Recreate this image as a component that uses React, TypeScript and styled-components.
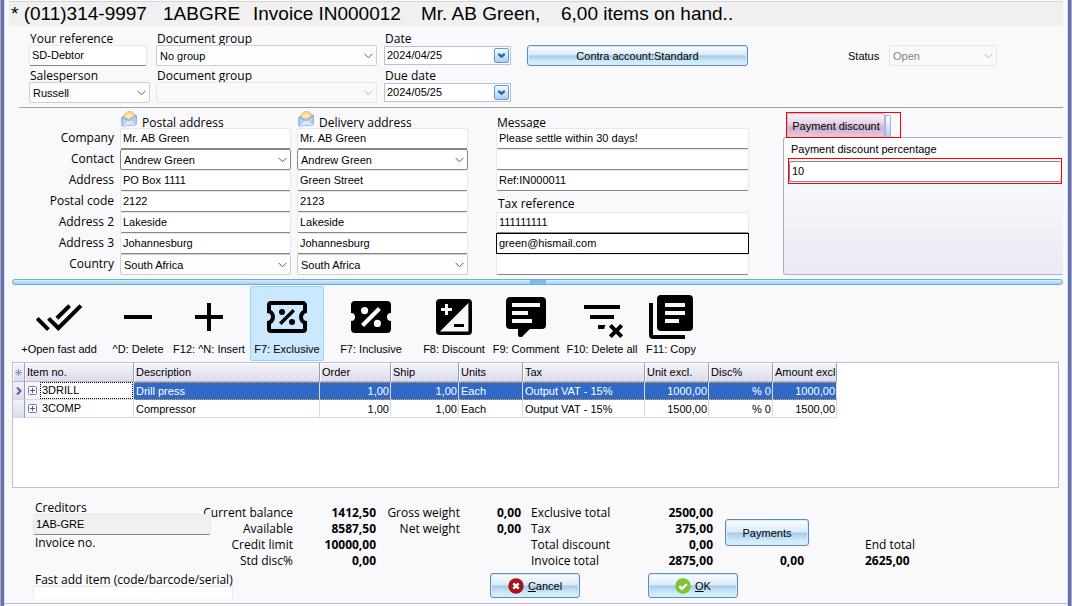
import React, { useState } from "react";
import styled, { createGlobalStyle, css } from "styled-components";

const uiFont = '"Liberation Sans", Arial, sans-serif';
const labelFont = '"Open Sans", "Noto Sans", sans-serif';

const GlobalStyle = createGlobalStyle`
  *, *::before, *::after { box-sizing: border-box; }
  body { margin: 0; padding: 0 1px; background: #a9abb8; }
  body, button, input, select { font-family: ${uiFont}; font-size: 11px; color: #000; }
  button { padding: 0; cursor: default; }
`;

const Window = styled.div`
  min-height: 100vh;
  display: flex;
  flex-direction: column;
  padding: 1px 5px 0 4px;
  background: #f9f9fc;
  border-left: 3px solid #6672b0;
  border-right: 3px solid #6672b0;
  box-shadow: inset 1px 0 #d5d9ec, inset -1px 0 #d5d9ec;
  overflow: hidden;
`;

const TitleBar = styled.header`
  display: flex;
  height: 25px;
  margin-left: 1px;
  padding-left: 2px;
  align-items: center;
  background: #f0f0f0;
  border-top: 1px solid #d6d6d6;
  font-size: 19px;
  line-height: 24px;
  white-space: pre;
`;

const TitlePart = styled.span<{ $width: number }>`
  flex: 0 0 ${(p) => p.$width}px;
`;

const TopFields = styled.section`
  display: flex;
  align-items: flex-start;
  margin-left: 11px;
  padding: 5px 0 2px 10px;
  border-bottom: 1px solid #a0a0a0;
`;

const FieldColumn = styled.div<{ $width: number; $gap: number }>`
  flex: 0 0 ${(p) => p.$width}px;
  min-width: 0;
  margin-right: ${(p) => p.$gap}px;
`;

const Label = styled.label`
  display: block;
  font: 12px/16px ${labelFont};
  white-space: nowrap;
`;

const FieldLabel = styled(Label)`
  height: 16px;
  margin-bottom: -2px;
  padding-left: 1px;
`;

const TextInput = styled.input<{ $focus?: boolean }>`
  display: block;
  width: 100%;
  height: 21px;
  padding: 0 2px 1px;
  border: 1px solid #e8e8ec;
  border-bottom-color: #868686;
  border-radius: 2px;
  background: #fff;
  outline: none;
  &:read-only { background: #f0f0f0; }
  ${(p) => p.$focus && css`border-color: #000; border-radius: 0;`}
`;

const ReferenceInput = styled(TextInput)`
  width: 118px;
  margin-bottom: 2px;
`;

const SelectWrap = styled.div<{ $spaced?: boolean }>`
  position: relative;
  margin-bottom: ${(p) => (p.$spaced ? 2 : 0)}px;
`;

const SelectBox = styled.select<{ $strong?: boolean }>`
  appearance: none;
  display: block;
  width: 100%;
  height: 21px;
  padding: 0 18px 0 3px;
  border: 1px solid ${(p) => (p.$strong ? "#868686" : "#cfcfcf")};
  border-radius: 2px;
  background: ${(p) => (p.$strong ? "#fff" : "#fdfdfd")};
  outline: none;
  &:disabled { border-color: #e6e6e8; background: #f9f9fa; color: #838383; opacity: 1; }
`;

const SelectArrow = styled.svg<{ $dim?: boolean }>`
  position: absolute;
  right: 4px;
  top: 8px;
  width: 9px;
  height: 6px;
  fill: none;
  stroke: ${(p) => (p.$dim ? "#b8b8b8" : "#5c5c5c")};
  pointer-events: none;
`;

const DateBox = styled.div`
  display: flex;
  height: 19px;
  margin: 1px 0 3px;
  padding: 1px;
  border: 1px solid #b9bfde;
  background: #fff;
`;

const DateInput = styled.input`
  flex: 1;
  min-width: 0;
  width: 0;
  padding: 0 1px 1px;
  border: 0;
  outline: none;
  background: transparent;
`;

const DateButton = styled.button`
  width: 15px;
  border: 1px solid #5d9cd8;
  border-radius: 2px;
  background: linear-gradient(#f5faff, #a9d0f0);
  svg { display: block; margin: auto; }
`;

const GlassButton = styled.button<{ $height: number; $width: number }>`
  display: flex;
  align-items: center;
  justify-content: center;
  gap: 4px;
  width: ${(p) => p.$width}px;
  height: ${(p) => p.$height}px;
  border: 1px solid #5c8cc0;
  border-radius: 3px;
  box-shadow: inset 0 0 0 1px #d9ebf8;
  background: linear-gradient(#fbfdff 0%, #dcebf7 47%, #a4cbe9 52%, #cbe6f7 78%, #d8f2fb 100%);
`;

const ContraButton = styled(GlassButton)`
  margin: 14px 100px 0 0;
`;

const StatusField = styled.div`
  display: grid;
  grid-template-columns: 41px 108px;
  align-items: center;
  padding-top: 14px;
`;

const Middle = styled.section`
  display: flex;
`;

const AddressGrid = styled.div`
  display: grid;
  grid-template-columns: 106px 171px 171px 275px;
  grid-template-rows: 20px;
  grid-auto-rows: 21px;
  column-gap: 6px;
  & > :nth-child(4n) { width: auto; margin-left: 22px; }
`;

const RowLabel = styled(Label)`
  text-align: right;
  line-height: 20px;
`;

const ColumnHead = styled.div`
  display: flex;
  gap: 5px;
  padding: 2px 0 0 1px;
  font: 12px/16px ${labelFont};
  white-space: nowrap;
  svg { flex: none; }
`;

const HeadText = styled.span`
  padding-top: 5px;
`;

const TaxLabel = styled(Label)`
  padding: 5px 0 0 2px;
`;

const DiscountPane = styled.div`
  flex: 1;
  min-width: 0;
  margin-left: 34px;
  padding-top: 4px;
`;

const TabStrip = styled.div`
  display: flex;
  width: 115px;
  height: 26px;
  margin: 0 0 -1px 3px;
  border: 1px solid #f00;
  position: relative;
`;

const Tab = styled.button`
  width: 98px;
  border: 1px solid #c9b6cf;
  border-radius: 3px 3px 0 0;
  border-bottom: 0;
  background: linear-gradient(#fbf6fb 0%, #e3cfe2 45%, #cfb0ce 60%, #e2cbe1 100%);
  white-space: nowrap;
`;

const TabStub = styled.span`
  width: 6px;
  margin-top: 2px;
  border: 1px solid #9fb4d8;
  border-bottom: 0;
  border-radius: 0 2px 0 0;
  background: linear-gradient(#fff, #a9d3f3);
`;

const TabPanel = styled.div`
  height: 138px;
  padding: 3px 1px 0 4px;
  border: 1px solid #a8b0d2;
  border-right: 0;
  border-radius: 3px 0 0 3px;
  background: linear-gradient(#fff, #f9f9fc 25%, #eaeaf5);
`;

const PercentLabel = styled.label`
  display: block;
  padding-left: 3px;
  line-height: 16px;
`;

const Highlight = styled.div`
  height: 26px;
  margin-top: 1px;
  padding-top: 2px;
  border: 1px solid #f00;
`;

const PercentInput = styled(TextInput)`
  border-color: #868686;
  border-right: 0;
`;

const Splitter = styled.div`
  display: flex;
  justify-content: center;
  height: 6px;
  margin: 4px 0 0 4px;
  border: 1px solid #6baae0;
  border-radius: 3px;
  background: linear-gradient(#d9edfc, #a3d2f6);
`;

const SplitterGrip = styled.span`
  width: 16px;
  background: #7dbcf0;
`;

const Toolbar = styled.nav`
  display: flex;
  height: 77px;
  padding: 1px 0 0 2px;
`;

const ToolButton = styled.button<{ $width: number; $active?: boolean }>`
  flex: 0 0 ${(p) => p.$width}px;
  display: flex;
  flex-direction: column;
  align-items: center;
  height: 75px;
  padding-top: 6px;
  border: 1px solid ${(p) => (p.$active ? "#99d1ff" : "transparent")};
  border-radius: 2px;
  background: ${(p) => (p.$active ? "#cce8ff" : "transparent")};
  white-space: nowrap;
  svg { width: 48px; height: 48px; flex: none; fill: #000; }
`;

const ToolText = styled.span`
  line-height: 16px;
`;

const GridBox = styled.div`
  min-height: 126px;
  margin: 0 4px 0 4px;
  border: 1px solid #b9bfd8;
  background: #fff;
`;

const ItemTable = styled.table`
  width: 824px;
  table-layout: fixed;
  border-collapse: separate;
  border-spacing: 0;
`;

const HeadCell = styled.th`
  height: 19px;
  padding: 0 2px;
  border-right: 1px solid #929cc4;
  border-bottom: 1px solid #b5bad4;
  background: linear-gradient(#f4f4f8, #dcddea);
  box-shadow: inset 1px 1px #fff;
  font-weight: normal;
  text-align: left;
  white-space: nowrap;
  color: #000;
  svg { display: block; margin: auto; }
`;

const Cell = styled.td<{ $selected?: boolean; $right?: boolean }>`
  height: 18px;
  padding: 0 2px;
  border-right: 1px solid #d8d8f0;
  border-bottom: 1px solid #d8d8f0;
  text-align: ${(p) => (p.$right ? "right" : "left")};
  white-space: nowrap;
  ${(p) => p.$right && css`padding-right: 1px;`}
  ${(p) =>
    p.$selected &&
    css`
      border-top: 1px dotted #e0a050;
      border-bottom: 1px dotted #e0a050;
      background: #316ac5;
      color: #fff;
    `}
`;

const MarkCell = styled(Cell)`
  padding: 0;
  background: linear-gradient(#f2f2f8, #dcddea);
  border-right-color: #929cc4;
  svg { display: block; margin: auto; }
`;

const ItemCell = styled(Cell)`
  padding: 0;
`;

const ItemInner = styled.div<{ $selected?: boolean }>`
  display: flex;
  align-items: center;
  height: 17px;
  background: ${(p) => (p.$selected ? "#fdf3f6" : "#f1f4fd")};
`;

const ExpandButton = styled.button`
  flex: 0 0 15px;
  height: 17px;
  border: 0;
  background: transparent;
  svg { display: block; margin: auto; }
`;

const ItemCode = styled.span<{ $selected?: boolean }>`
  flex: 1;
  height: 17px;
  padding-left: 1px;
  border: 1px ${(p) => (p.$selected ? "dotted #000" : "solid #fff")};
  background: #fff;
  line-height: 15px;
`;

const Footer = styled.footer`
  display: flex;
  align-items: flex-start;
  height: 116px;
  margin: 0 -4px;
  padding: 12px 0 0 29px;
  border-bottom: 1px solid #b5bbd8;
`;

const CreditorColumn = styled.div`
  flex: 0 0 178px;
  min-width: 0;
  ${Label} { padding-left: 2px; }
`;

const CreditorInput = styled(TextInput)`
  position: relative;
  margin: -2px 0 0;
`;

const FastInput = styled(TextInput)`
  width: 200px;
  height: 13px;
  margin-top: -2px;
  border-bottom: 0;
`;

const FastLabel = styled(Label)`
  margin-top: 21px;
`;

const Summary = styled.div`
  flex: 1;
  min-width: 0;
  padding-top: 5px;
`;

const Totals = styled.div`
  display: grid;
  grid-template-columns: 82px 83px 84px 61px 92px 100px 96px 1fr;
  grid-template-rows: repeat(4, 16px);
`;

const TotalLabel = styled.span<{ $col: number; $row: number; $indent?: number }>`
  grid-column: ${(p) => p.$col};
  grid-row: ${(p) => p.$row};
  display: flex;
  justify-content: ${(p) => (p.$indent ? "flex-start" : "flex-end")};
  padding-left: ${(p) => p.$indent || 0}px;
  font: 12px/16px ${labelFont};
  white-space: nowrap;
`;

const TotalValue = styled(TotalLabel)`
  font-weight: bold;
`;

const PaymentsCell = styled.div`
  grid-column: 7;
  grid-row: 1 / 4;
  align-self: end;
  justify-self: end;
  margin-bottom: 7px;
`;

const PaidValue = styled(TotalValue)`
  padding-right: 5px;
`;

const Actions = styled.div`
  display: flex;
  gap: 68px;
  padding: 4px 0 0 279px;
`;

const ButtonIcon = styled.svg`
  width: 16px;
  height: 16px;
`;

type SelectProps = { id: string; value: string; disabled?: boolean; strong?: boolean; spaced?: boolean; label?: string };

function Select({ id, value, disabled, strong, spaced, label }: SelectProps) {
  return (
    <SelectWrap $spaced={spaced}>
      <SelectBox id={id} disabled={disabled} $strong={strong} aria-label={label} defaultValue={value}>
        <option value={value}>{value}</option>
      </SelectBox>
      <SelectArrow viewBox="0 0 9 6" $dim={disabled} aria-hidden="true">
        <path d="M.5 .8l4 4 4-4" />
      </SelectArrow>
    </SelectWrap>
  );
}

function DatePicker({ id, value }: { id: string; value: string }) {
  return (
    <DateBox>
      <DateInput id={id} defaultValue={value} />
      <DateButton type="button" aria-label="Open calendar">
        <svg width="7" height="6" viewBox="0 0 7 6">
          <path d="M0 .5h2l1.500 1.500L5 .5h2v1.700L3.500 5.200 0 2.200z" fill="#2b67ad" />
        </svg>
      </DateButton>
    </DateBox>
  );
}

function Envelope() {
  return (
    <svg width="16" height="17" viewBox="0 0 16 17" aria-hidden="true">
      <path d="M.8 7.500L8 1.500l7.500 4.300-.6 8.900L1.200 16z" fill="#a9c3ee" stroke="#8497d2" strokeWidth=".8" />
      <path d="M2.700 6.800C4 2.600 6.500 1 9.300 1.400c2.600.3 4 2.200 4.500 4.600L8.300 10z" fill="#f8d58b" stroke="#e2a85f" strokeWidth=".6" />
      <path d="M4.500 6.500c1.500-2.500 4-3.200 7-1.700l-3.300 3z" fill="#fff3cf" />
      <path d="M.8 7.500l7.400 3.400 7.300-5.100-.6 8.900L1.200 16z" fill="#b5d8f6" stroke="#7f9ad6" strokeWidth=".7" />
      <path d="M1.200 16l5.200-6 1.800.9 2-1.300 4.700 5.100" fill="#d3ebfb" stroke="#8fb2e2" strokeWidth=".7" />
    </svg>
  );
}

const toolIcons: Record<string, string> = {
  doneAll:
    "M18 7l-1.410-1.410-6.340 6.340 1.410 1.410L18 7zm4.240-1.410L11.660 16.170 7.480 12l-1.410 1.410L11.660 19l12-12-1.420-1.410zM.41 13.410L6 19l1.410-1.410L1.830 12 .41 13.410z",
  minus: "M19 13H5v-2h14z",
  plus: "M19 13h-6v6h-2v-6H5v-2h6V5h2v6h6z",
  ticketOutline:
    "M14.800 8L16 9.200 9.200 16 8 14.800zM4 4h16c1.110 0 2 .89 2 2v4c-1.100 0-2 .9-2 2a2 2 0 0 0 2 2v4a2 2 0 0 1-2 2H4a2 2 0 0 1-2-2v-4c1.110 0 2-.89 2-2a2 2 0 0 0-2-2V6a2 2 0 0 1 2-2m0 2v2.540C5.240 9.260 6 10.570 6 12s-.76 2.750-2 3.460V18h16v-2.540c-1.240-.72-2-2.030-2-3.460s.76-2.750 2-3.460V6zM9.500 8a1.500 1.500 0 1 1 0 3 1.500 1.500 0 0 1 0-3m5 5a1.500 1.500 0 1 1 0 3 1.500 1.500 0 0 1 0-3",
  ticket:
    "M4 4a2 2 0 0 0-2 2v4a2 2 0 0 1 0 4v4a2 2 0 0 0 2 2h16a2 2 0 0 0 2-2v-4a2 2 0 0 1 0-4V6a2 2 0 0 0-2-2zM15.500 7L17 8.500 8.500 17 7 15.500zM8.800 7a1.800 1.800 0 1 1 0 3.600 1.800 1.800 0 0 1 0-3.600m6.400 6.400a1.800 1.800 0 1 1 0 3.600 1.800 1.800 0 0 1 0-3.600",
  exposure:
    "M5 3h14a2 2 0 0 1 2 2v14a2 2 0 0 1-2 2H5a2 2 0 0 1-2-2V5a2 2 0 0 1 2-2m14.200 2L5 19.200h14.200zM7.500 5.500v2h-2V9h2v2H9V9h2V7.500H9v-2zM12 15.500h5V17h-5z",
  comment:
    "M9 22a1 1 0 0 1-1-1v-3H4a2 2 0 0 1-2-2V4c0-1.110.9-2 2-2h16a2 2 0 0 1 2 2v12a2 2 0 0 1-2 2h-6.100l-3.700 3.710c-.2.190-.450.290-.7.290zM5 5v2h14V5zm0 4v2h8V9zm0 4v2h10v-2z",
  filterRemove:
    "M21 8H3V6h18zm-7.190 8H10v2h3.090c.12-.72.370-1.390.72-2M18 11H6v2h12zm3.120 4.460L19 17.590l-2.120-2.130-1.420 1.420L17.590 19l-2.130 2.120 1.420 1.420L19 20.410l2.120 2.130 1.420-1.420L20.410 19l2.130-2.120z",
  textBoxes:
    "M7 1h14a2 2 0 0 1 2 2v14a2 2 0 0 1-2 2H7a2 2 0 0 1-2-2V3a2 2 0 0 1 2-2m2 4v2h10V5zm0 4v2h10V9zm0 4v2h7v-2zM1 5h2v16h16v2H3a2 2 0 0 1-2-2z",
};

const tools = [
  { icon: "doneAll", text: "+Open fast add", width: 98 },
  { icon: "minus", text: "^D: Delete", width: 60 },
  { icon: "plus", text: "F12: ^N: Insert", width: 82 },
  { icon: "ticketOutline", text: "F7: Exclusive", width: 74 },
  { icon: "ticket", text: "F7: Inclusive", width: 94 },
  { icon: "exposure", text: "F8: Discount", width: 72 },
  { icon: "comment", text: "F9: Comment", width: 72 },
  { icon: "filterRemove", text: "F10: Delete all", width: 80 },
  { icon: "textBoxes", text: "F11: Copy", width: 58 },
];

const columns = [
  { title: "Item no.", width: 109 },
  { title: "Description", width: 186 },
  { title: "Order", width: 71, right: true },
  { title: "Ship", width: 68, right: true },
  { title: "Units", width: 64 },
  { title: "Tax", width: 122 },
  { title: "Unit excl.", width: 64, right: true },
  { title: "Disc%", width: 64, right: true },
  { title: "Amount excl", width: 64, right: true },
];

const items = [
  ["3DRILL", "Drill press", "1,00", "1,00", "Each", "Output VAT - 15%", "1000,00", "% 0", "1000,00"],
  ["3COMP", "Compressor", "1,00", "1,00", "Each", "Output VAT - 15%", "1500,00", "% 0", "1500,00"],
];

const addressRows = [
  { label: "Company", postal: "Mr. AB Green", delivery: "Mr. AB Green", note: "Please settle within 30 days!" },
  { label: "Contact", postal: "Andrew Green", delivery: "Andrew Green", note: "", combo: true, strong: true },
  { label: "Address", postal: "PO Box 1111", delivery: "Green Street", note: "Ref:IN000011" },
  { label: "Postal code", postal: "2122", delivery: "2123", taxLabel: true },
  { label: "Address 2", postal: "Lakeside", delivery: "Lakeside", note: "111111111" },
  { label: "Address 3", postal: "Johannesburg", delivery: "Johannesburg", note: "green@hismail.com", focus: true },
  { label: "Country", postal: "South Africa", delivery: "South Africa", note: "", combo: true },
];

const balances = [
  ["Current balance", "1412,50"],
  ["Available", "8587,50"],
  ["Credit limit", "10000,00"],
  ["Std disc%", "0,00"],
];
const weights = [
  ["Gross weight", "0,00"],
  ["Net weight", "0,00"],
];
const totals = [
  ["Exclusive total", "2500,00"],
  ["Tax", "375,00"],
  ["Total discount", "0,00"],
  ["Invoice total", "2875,00"],
];

export default function App() {
  const [activeTool, setActiveTool] = useState(3);
  return (
    <>
      <GlobalStyle />
      <Window>
        <TitleBar>
          <TitlePart $width={152}>* (011)314-9997</TitlePart>
          <TitlePart $width={90}>1ABGRE</TitlePart>
          <TitlePart $width={168}>Invoice IN000012</TitlePart>
          <TitlePart $width={140}>Mr. AB Green,</TitlePart>
          <span>6,00 items on hand..</span>
        </TitleBar>

        <TopFields>
          <FieldColumn $width={121} $gap={6}>
            <FieldLabel htmlFor="reference">Your reference</FieldLabel>
            <ReferenceInput id="reference" defaultValue="SD-Debtor" />
            <FieldLabel htmlFor="salesperson">Salesperson</FieldLabel>
            <Select id="salesperson" value="Russell" />
          </FieldColumn>
          <FieldColumn $width={221} $gap={7}>
            <FieldLabel htmlFor="group1">Document group</FieldLabel>
            <Select id="group1" value="No group" spaced />
            <FieldLabel htmlFor="group2">Document group</FieldLabel>
            <Select id="group2" value="" disabled />
          </FieldColumn>
          <FieldColumn $width={127} $gap={16}>
            <FieldLabel htmlFor="date">Date</FieldLabel>
            <DatePicker id="date" value="2024/04/25" />
            <FieldLabel htmlFor="due">Due date</FieldLabel>
            <DatePicker id="due" value="2024/05/25" />
          </FieldColumn>
          <ContraButton type="button" $width={221} $height={21}>Contra account:Standard</ContraButton>
          <StatusField>
            <label htmlFor="status">Status</label>
            <Select id="status" value="Open" disabled />
          </StatusField>
        </TopFields>

        <Middle>
          <AddressGrid>
            <span />
            <ColumnHead><Envelope /><HeadText>Postal address</HeadText></ColumnHead>
            <ColumnHead><Envelope /><HeadText>Delivery address</HeadText></ColumnHead>
            <ColumnHead><HeadText>Message</HeadText></ColumnHead>
            {addressRows.map((r, i) => (
              <React.Fragment key={r.label}>
                <RowLabel htmlFor={`postal${i}`}>{r.label}</RowLabel>
                {r.combo ? (
                  <Select id={`postal${i}`} value={r.postal} strong={r.strong} />
                ) : (
                  <TextInput id={`postal${i}`} defaultValue={r.postal} />
                )}
                {r.combo ? (
                  <Select id={`delivery${i}`} value={r.delivery} strong={r.strong} label={`Delivery ${r.label}`} />
                ) : (
                  <TextInput aria-label={`Delivery ${r.label}`} defaultValue={r.delivery} />
                )}
                {r.taxLabel ? (
                  <TaxLabel htmlFor="note4">Tax reference</TaxLabel>
                ) : (
                  <TextInput id={`note${i}`} aria-label={`Message line ${i + 1}`} defaultValue={r.note} $focus={r.focus} />
                )}
              </React.Fragment>
            ))}
          </AddressGrid>
          <DiscountPane>
            <TabStrip>
              <Tab type="button">Payment discount</Tab>
              <TabStub />
            </TabStrip>
            <TabPanel>
              <PercentLabel htmlFor="percent">Payment discount percentage</PercentLabel>
              <Highlight>
                <PercentInput id="percent" defaultValue="10" />
              </Highlight>
            </TabPanel>
          </DiscountPane>
        </Middle>

        <Splitter><SplitterGrip /></Splitter>

        <Toolbar>
          {tools.map((t, i) => (
            <ToolButton key={t.text} type="button" $width={t.width} $active={i === activeTool} onClick={() => setActiveTool(i)}>
              <svg viewBox="0 0 24 24" aria-hidden="true">
                <path fillRule="evenodd" d={toolIcons[t.icon]} />
              </svg>
              <ToolText>{t.text}</ToolText>
            </ToolButton>
          ))}
        </Toolbar>

        <GridBox>
          <ItemTable>
            <colgroup>
              <col width={12} />
              {columns.map((c) => <col key={c.title} width={c.width} />)}
            </colgroup>
            <thead>
              <tr>
                <HeadCell>
                  <svg width="7" height="7" viewBox="0 0 7 7" stroke="#7a86bd" strokeWidth=".8">
                    <path d="M3.500 0v7M0 3.500h7M1 1l5 5M6 1L1 6" />
                  </svg>
                </HeadCell>
                {columns.map((c) => <HeadCell key={c.title}>{c.title}</HeadCell>)}
              </tr>
            </thead>
            <tbody>
              {items.map((row, r) => (
                <tr key={row[0]}>
                  <MarkCell>
                    {r === 0 && (
                      <svg width="6" height="8" viewBox="0 0 6 8" fill="none" stroke="#5563a8" strokeWidth="2">
                        <path d="M1 .5L4.500 4 1 7.500" />
                      </svg>
                    )}
                  </MarkCell>
                  <ItemCell>
                    <ItemInner $selected={r === 0}>
                      <ExpandButton type="button" aria-label="Expand">
                        <svg width="9" height="9" viewBox="0 0 9 9" fill="#fff" stroke="#6e7cb8">
                          <rect x=".5" y=".5" width="8" height="8" rx="1" />
                          <path d="M2 4.500h5M4.500 2v5" stroke="#4656a0" />
                        </svg>
                      </ExpandButton>
                      <ItemCode $selected={r === 0}>{row[0]}</ItemCode>
                    </ItemInner>
                  </ItemCell>
                  {row.slice(1).map((v, c) => (
                    <Cell key={c} $selected={r === 0} $right={columns[c + 1].right}>{v}</Cell>
                  ))}
                </tr>
              ))}
            </tbody>
          </ItemTable>
        </GridBox>

        <Footer>
          <CreditorColumn>
            <Label htmlFor="creditor">Creditors</Label>
            <CreditorInput id="creditor" readOnly value="1AB-GRE" />
            <Label as="span">Invoice no.</Label>
            <FastLabel htmlFor="fast">Fast add item (code/barcode/serial)</FastLabel>
            <FastInput id="fast" />
          </CreditorColumn>
          <Summary>
            <Totals>
              {balances.map(([label, value], i) => (
                <React.Fragment key={label}>
                  <TotalLabel $col={1} $row={i + 1}>{label}</TotalLabel>
                  <TotalValue $col={2} $row={i + 1}>{value}</TotalValue>
                </React.Fragment>
              ))}
              {weights.map(([label, value], i) => (
                <React.Fragment key={label}>
                  <TotalLabel $col={3} $row={i + 1}>{label}</TotalLabel>
                  <TotalValue $col={4} $row={i + 1}>{value}</TotalValue>
                </React.Fragment>
              ))}
              {totals.map(([label, value], i) => (
                <React.Fragment key={label}>
                  <TotalLabel $col={5} $row={i + 1} $indent={10}>{label}</TotalLabel>
                  <TotalValue $col={6} $row={i + 1}>{value}</TotalValue>
                </React.Fragment>
              ))}
              <PaymentsCell>
                <GlassButton type="button" $width={84} $height={27}>Payments</GlassButton>
              </PaymentsCell>
              <PaidValue $col={7} $row={4}>0,00</PaidValue>
              <TotalLabel $col={8} $row={3} $indent={56}>End total</TotalLabel>
              <TotalValue $col={8} $row={4} $indent={56}>2625,00</TotalValue>
            </Totals>
            <Actions>
              <GlassButton type="button" $width={90} $height={25}>
                <ButtonIcon viewBox="0 0 16 16" aria-hidden="true">
                  <circle cx="8" cy="8" r="7.700" fill="#a81418" />
                  <path d="M5.300 5.300l5.400 5.400M10.700 5.300l-5.400 5.400" stroke="#fff" strokeWidth="2.400" />
                </ButtonIcon>
                <span><u>C</u>ancel</span>
              </GlassButton>
              <GlassButton type="button" $width={90} $height={25}>
                <ButtonIcon viewBox="0 0 16 16" aria-hidden="true">
                  <circle cx="8" cy="8" r="7.700" fill="#7cc52c" />
                  <path d="M4.200 8.200l2.700 2.600 5-4.800" fill="none" stroke="#fff" strokeWidth="2.400" />
                </ButtonIcon>
                <span><u>O</u>K</span>
              </GlassButton>
            </Actions>
          </Summary>
        </Footer>
      </Window>
    </>
  );
}
